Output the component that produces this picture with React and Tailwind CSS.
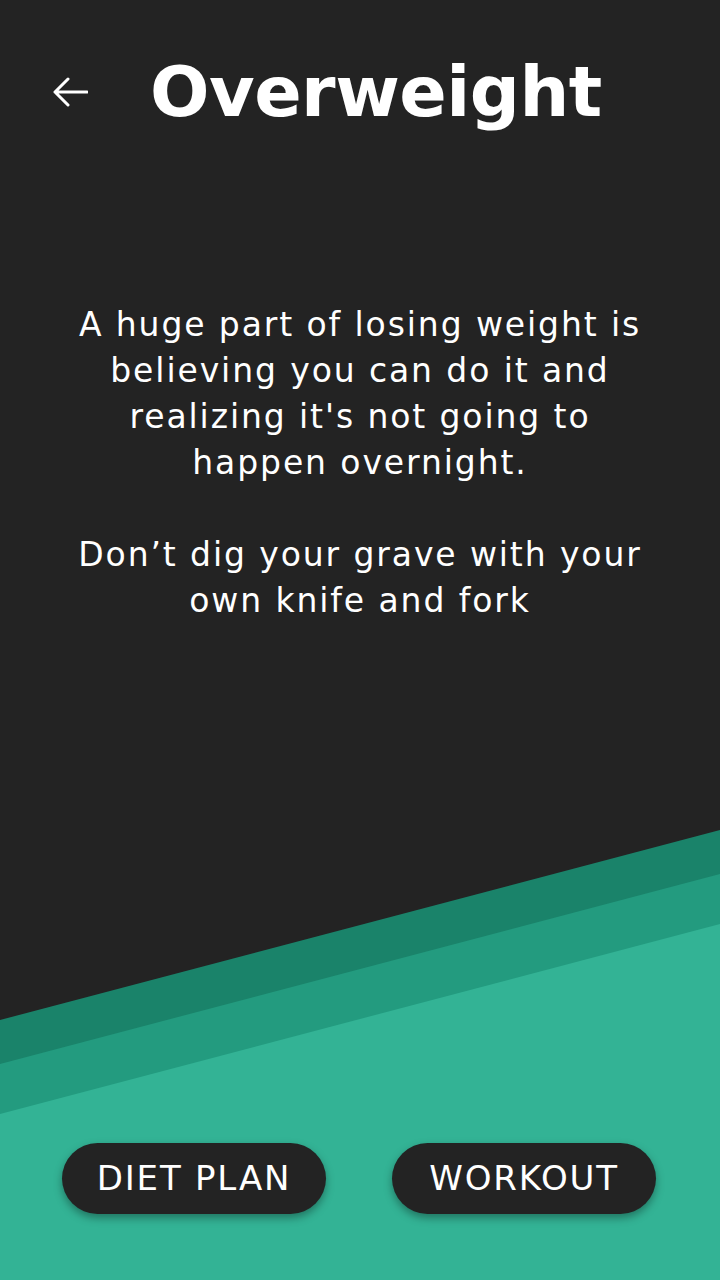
export default function App() {
  return (
    <div className="relative h-[1280px] w-[720px] overflow-hidden bg-[#232323] text-white">
      {/* layered waves at the bottom */}
      <svg className="absolute inset-0" width="720" height="1280" viewBox="0 0 720 1280">
        <polygon points="0,1020 720,830 720,1280 0,1280" fill="#1a836a" />
        <polygon points="0,1064 720,874 720,1280 0,1280" fill="#239b7f" />
        <polygon points="0,1114 720,924 720,1280 0,1280" fill="#33b395" />
      </svg>

      <div className="relative flex h-full flex-col">
        <header className="flex items-center pl-[52px] pt-[56px]">
          <button type="button" className="flex h-[36px] w-[36px] items-center justify-center">
            <svg width="36" height="32" viewBox="0 0 36 32" fill="none">
              <path
                d="M3 16h32M16 3 3 16l13 13"
                stroke="white"
                strokeWidth="3"
                strokeLinecap="round"
                strokeLinejoin="round"
              />
            </svg>
          </button>
          <h1 className="ml-[62px] font-['DejaVu_Sans',sans-serif] text-[70px] font-bold leading-[72px] tracking-[-0.5px]">
            Overweight
          </h1>
        </header>

        <div className="mt-[174px] text-center font-['DejaVu_Sans',sans-serif] text-[33px] leading-[46px] tracking-[1.9px]">
          <p>
            A huge part of losing weight is
            <br />
            believing you can do it and
            <br />
            realizing it's not going to
            <br />
            happen overnight.
          </p>
          <p className="mt-[46px]">
            Don’t dig your grave with your
            <br />
            own knife and fork
          </p>
        </div>

        <div className="flex-1" />

        <div className="flex gap-[66px] pb-[66px] pl-[62px] font-['DejaVu_Sans',sans-serif] text-[34px] tracking-[1.8px]">
          <button
            type="button"
            className="flex h-[71px] w-[264px] items-center justify-center rounded-full bg-[#232323] shadow-[0_4px_8px_rgba(0,0,0,0.35)]"
          >
            DIET PLAN
          </button>
          <button
            type="button"
            className="flex h-[71px] w-[264px] items-center justify-center rounded-full bg-[#232323] shadow-[0_4px_8px_rgba(0,0,0,0.35)]"
          >
            WORKOUT
          </button>
        </div>
      </div>
    </div>
  );
}
